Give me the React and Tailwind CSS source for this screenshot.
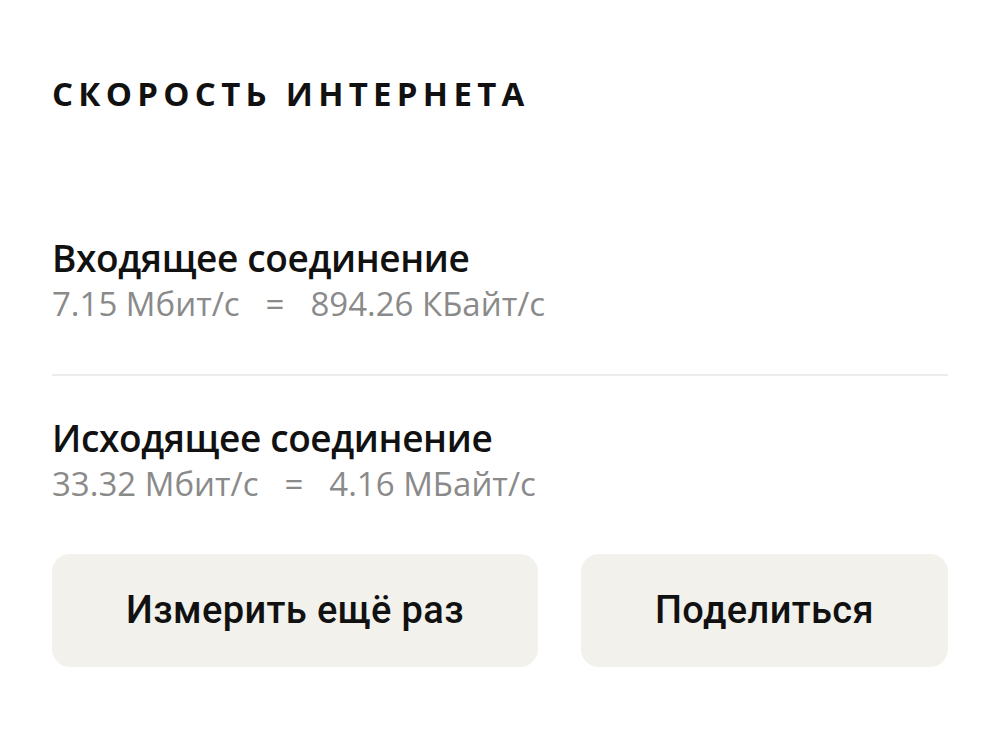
export default function App() {
  const rows = [
    { title: 'Входящее соединение', bits: '7.15 Мбит/с', bytes: '894.26 КБайт/с' },
    { title: 'Исходящее соединение', bits: '33.32 Мбит/с', bytes: '4.16 МБайт/с' },
  ]

  return (
    <div className="w-[1000px] h-[732px] bg-white px-[52px] pt-[76px] font-['Open_Sans',sans-serif]">
      <h1 className="text-[33px] leading-[36px] font-bold tracking-[0.16em] text-[#111]">СКОРОСТЬ ИНТЕРНЕТА</h1>

      <div className="mt-[124px]">
        {rows.map((r, i) => (
          <div key={r.title}>
            {i > 0 && <div className="h-[2px] bg-[#ececec] mt-[48px] mb-[40px]" />}
            <div className="text-[37px] leading-[44px] font-semibold text-[#111] tracking-[-0.01em]">{r.title}</div>
            <div className="flex items-center gap-[26px] mt-[2px] text-[33px] leading-[44px] text-[#8a8a8a]">
              <span>{r.bits}</span>
              <span>=</span>
              <span>{r.bytes}</span>
            </div>
          </div>
        ))}
      </div>

      <div className="flex gap-[43px] mt-[48px] font-['Roboto',sans-serif]">
        <button className="w-[486px] h-[113px] rounded-[18px] bg-[#f2f1ec] text-[38px] font-medium tracking-[0.01em] text-[#111]">
          Измерить ещё раз
        </button>
        <button className="flex-1 h-[113px] rounded-[18px] bg-[#f2f1ec] text-[38px] font-medium tracking-[0.01em] text-[#111]">
          Поделиться
        </button>
      </div>
    </div>
  )
}
